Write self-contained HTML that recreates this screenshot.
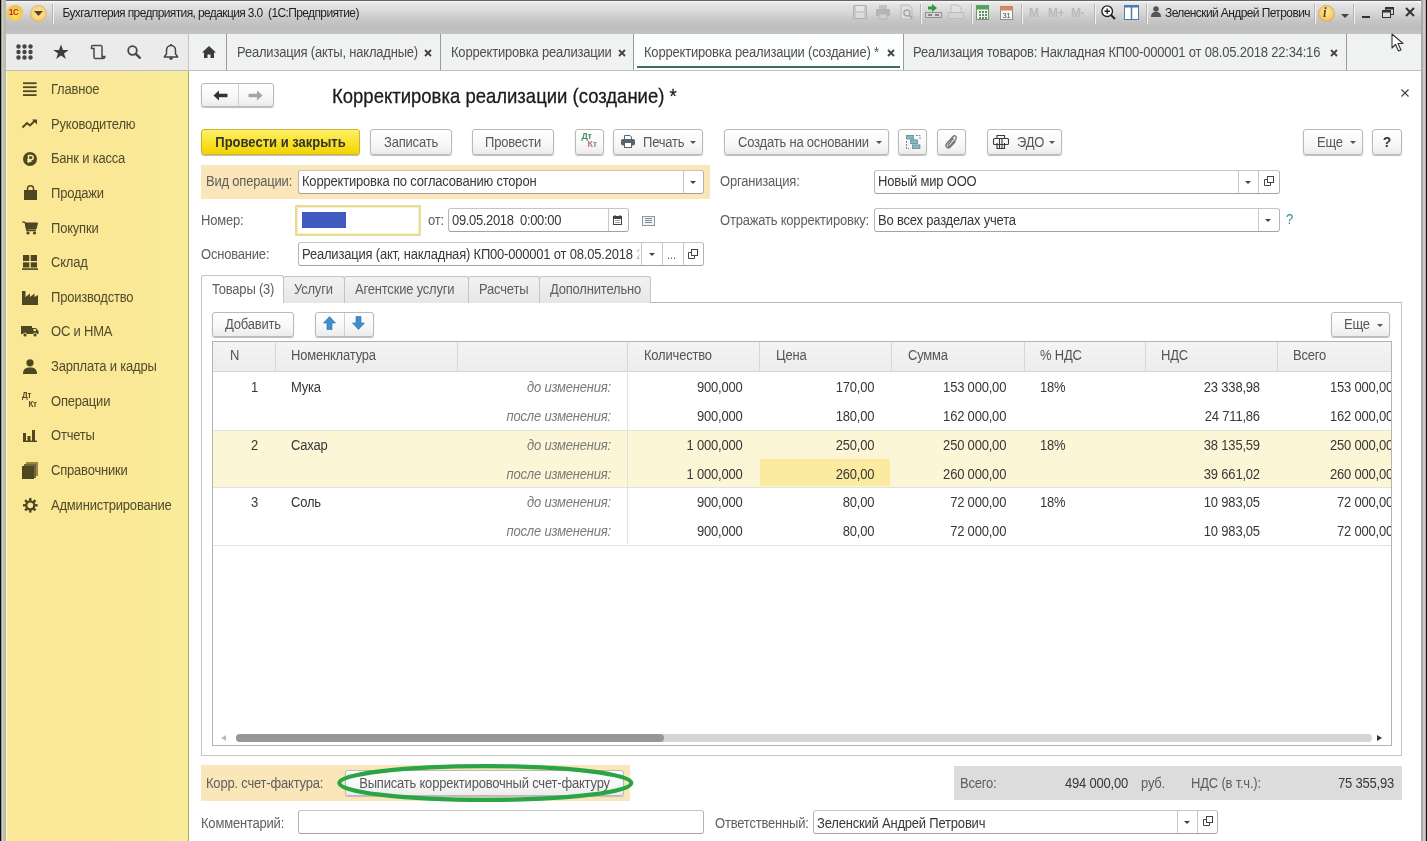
<!DOCTYPE html>
<html><head><meta charset="utf-8">
<style>
*{box-sizing:border-box;margin:0;padding:0}
html,body{width:1427px;height:841px;overflow:hidden;background:#fff}
body{position:relative;font-family:"Liberation Sans",sans-serif;font-size:13px;color:#4d4d4d;letter-spacing:-0.2px}
.a{position:absolute}
.t{position:absolute;white-space:pre;line-height:16px;transform:scaleY(1.1);transform-origin:0 12.5px}
svg{position:absolute;overflow:visible}
/* frame */
#frL{left:0;top:0;width:6px;height:841px;background:linear-gradient(90deg,#080808 0,#080808 1px,#8a8c8a 1px,#9a9c9a 1.6px,#cdd0cc 2px,#cdd0cc 3px,#c0bfac 3.5px,#b9b79e 6px)}
#frR{left:1421px;top:0;width:6px;height:841px;background:linear-gradient(90deg,#aaa 0,#aaa 1.5px,#c9c9c9 1.5px,#c9c9c9 4px,#aaa 4px,#aaa 5px,#111 5px)}
#frT{left:0;top:0;width:1427px;height:1px;background:#666}
#title{left:6px;top:1px;width:1415px;height:33px;background:linear-gradient(180deg,#f6f6f6 0,#e4e4e4 3px,#d8d8d8 11px,#c6c6c6 19px,#bdbdbd 27px,#c3c3c3 33px);border-top-right-radius:6px}
.sep{position:absolute;width:1px;background:#b5b5b5;box-shadow:1px 0 0 #f2f2f2}
/* toolbar row */
#tbL{left:6px;top:34px;width:183px;height:37px;background:#ebebeb;border-bottom:1px solid #bdbdbd;border-right:1px solid #c4c4c4}
#tabs{left:189px;top:34px;width:1232px;height:37px;background:#f0f1f1;border-bottom:1px solid #bfbfbf}
.tsep{position:absolute;top:34px;width:1px;height:36px;background:#9a9a9a}
.tab{font-size:13px;color:#4e4e4e;top:45px}
.tx{font-size:15px;color:#555;font-weight:bold;top:43px}
/* sidebar */
#side{left:6px;top:71px;width:183px;height:770px;background:linear-gradient(90deg,#fcf4bc 0,#fae896 3px,#fae896 60%,#f8ec9a 100%);border-right:1px solid #aea86e}
.si{left:51px;color:#514b2c;font-size:13px}
/* form */
.btn{position:absolute;height:26px;border:1px solid #b9b9b9;border-radius:3px;background:linear-gradient(180deg,#fff 0,#f7f7f7 60%,#ececec 100%);box-shadow:0 1px 1px #bdbdbd;color:#585858;text-align:center;line-height:25px;white-space:nowrap}
.inp{position:absolute;height:24px;border:1px solid #b4b4b4;border-top-color:#c4c4c4;border-bottom-color:#a2a2a2;border-radius:3px;background:#fff}
.lbl{position:absolute;white-space:pre;color:#5e5e5e;line-height:16px;transform:scaleY(1.1);transform-origin:0 13.3px;margin-top:0.8px}
.val{position:absolute;white-space:pre;color:#383838;line-height:16px;transform:scaleY(1.1);transform-origin:0 13.3px;margin-top:0.8px}
.s{display:inline-block;transform:scaleY(1.1);transform-origin:0 70%}
</style></head><body><div id="root" style="position:absolute;left:0;top:0;width:1427px;height:841px;will-change:transform">
<div class="a" id="frT"></div>
<div class="a" id="title"></div>
<div class="a" id="frL"></div>
<div class="a" id="frR"></div>

<!-- title bar content -->
<div class="a" style="left:7px;top:5px;width:16px;height:16px;border-radius:50%;background:radial-gradient(circle at 50% 60%,#ffe36a 0,#f6c84a 55%,#e7b24a 100%)"></div>
<div class="t" style="left:9px;top:5px;font-size:8px;font-weight:bold;color:#b8301a;letter-spacing:-0.5px">1С</div>
<div class="a" style="left:30px;top:5px;width:17px;height:17px;border-radius:50%;background:radial-gradient(circle at 50% 45%,#fde7a2 0,#f7d27a 60%,#d9b066 100%);border:1px solid #d9b874"></div>
<svg style="left:34px;top:11px" width="9" height="5"><path d="M0 0H9L4.5 5Z" fill="#5a4520"/></svg>
<div class="sep" style="left:52px;top:4px;height:20px"></div>
<div class="t" style="left:62.5px;top:5.2px;font-size:12px;color:#1e1e1e;letter-spacing:-0.62px">Бухгалтерия предприятия, редакция 3.0  (1С:Предприятие)</div>

<!-- title bar right icons -->
<svg style="left:853px;top:5px" width="14" height="14"><rect x="0.5" y="0.5" width="13" height="13" rx="1" fill="#c9c9c9" stroke="#b0b0b0"/><rect x="3" y="1" width="8" height="5" fill="#e4e4e4"/><rect x="3" y="8" width="8" height="5" fill="#dcdcdc"/></svg>
<svg style="left:876px;top:5px" width="14" height="14"><rect x="3" y="0" width="8" height="4" fill="#c2c2c2"/><rect x="0" y="4" width="14" height="7" rx="1" fill="#b5b5b5"/><rect x="3" y="9" width="8" height="5" fill="#d0d0d0" stroke="#b5b5b5"/></svg>
<svg style="left:900px;top:5px" width="14" height="14"><path d="M1 0H9L12 3V14H1Z" fill="#dedede" stroke="#b8b8b8"/><circle cx="7" cy="8" r="3" fill="none" stroke="#a8a8a8" stroke-width="1.5"/><path d="M9 10L12 13" stroke="#a8a8a8" stroke-width="2"/></svg>
<div class="sep" style="left:920px;top:4px;height:20px"></div>
<svg style="left:925px;top:4px" width="17" height="16"><path d="M7 0L12 4L7 8V5.5H3V2.5H7Z" fill="#2f9a3a"/><rect x="0.5" y="8.5" width="16" height="5" fill="#d7d7d7" stroke="#909090"/><rect x="3" y="10" width="4" height="2" fill="#888"/><rect x="10" y="10" width="4" height="2" fill="#888"/></svg>
<svg style="left:948px;top:5px" width="16" height="14"><path d="M3 0H10L13 3V8H3Z" fill="#e2e2e2" stroke="#c0c0c0"/><rect x="0.5" y="7.5" width="15" height="6" fill="#d5d5d5" stroke="#bdbdbd"/></svg>
<div class="sep" style="left:971px;top:4px;height:20px"></div>
<svg style="left:976px;top:5px" width="13" height="15"><rect x="0.5" y="0.5" width="12" height="14" fill="#f4f4f4" stroke="#6a9d6a"/><rect x="0.5" y="0.5" width="12" height="4" fill="#4fa35a"/><g fill="#6a8a6a"><rect x="3" y="6" width="2" height="2"/><rect x="6" y="6" width="2" height="2"/><rect x="9" y="6" width="2" height="2"/><rect x="3" y="9" width="2" height="2"/><rect x="6" y="9" width="2" height="2"/><rect x="9" y="9" width="2" height="2"/><rect x="3" y="12" width="2" height="2"/><rect x="6" y="12" width="2" height="2"/><rect x="9" y="12" width="2" height="2"/></g></svg>
<svg style="left:1000px;top:4px" width="13" height="16"><rect x="0.5" y="2.5" width="12" height="13" fill="#f7f7f7" stroke="#9a8a7a"/><rect x="0.5" y="2.5" width="12" height="4" fill="#d9865a"/><text x="6.5" y="14" font-size="7.5" text-anchor="middle" fill="#444" font-family="Liberation Sans">31</text></svg>
<div class="sep" style="left:1021px;top:4px;height:20px"></div>
<div class="t" style="left:1029px;top:5px;font-size:12px;font-weight:bold;color:#b9b9b9;letter-spacing:0">M</div>
<div class="t" style="left:1048px;top:5px;font-size:12px;font-weight:bold;color:#b9b9b9;letter-spacing:-0.5px">M+</div>
<div class="t" style="left:1071px;top:5px;font-size:12px;font-weight:bold;color:#b9b9b9;letter-spacing:-0.5px">M-</div>
<div class="sep" style="left:1094px;top:4px;height:20px"></div>
<svg style="left:1101px;top:5px" width="15" height="15"><circle cx="6.2" cy="6.2" r="5.3" fill="#fff" stroke="#222" stroke-width="1.4"/><path d="M3.5 6.2H9M6.2 3.5V9" stroke="#222" stroke-width="1.4"/><path d="M10 10L14 14" stroke="#222" stroke-width="2"/></svg>
<svg style="left:1124px;top:5px" width="15" height="15"><rect x="0.5" y="0.5" width="14" height="14" fill="#fff" stroke="#4a7db0"/><rect x="0.5" y="0.5" width="14" height="2" fill="#4a7db0"/><path d="M7.5 2V15" stroke="#4a7db0" stroke-width="1.5"/></svg>
<div class="sep" style="left:1146px;top:4px;height:20px"></div>
<svg style="left:1151px;top:6px" width="10" height="11"><circle cx="5" cy="3" r="2.8" fill="#555"/><path d="M0 11C0 7 2 6 5 6S10 7 10 11Z" fill="#555"/></svg>
<div class="t" style="left:1165px;top:5px;font-size:12px;color:#1e1e1e;letter-spacing:-0.6px">Зеленский Андрей Петрович</div>
<div class="sep" style="left:1314px;top:4px;height:20px"></div>
<div class="a" style="left:1318px;top:5px;width:17px;height:17px;border-radius:50%;background:radial-gradient(circle at 50% 40%,#ffe9a0 0,#f4cd6a 60%,#d8a850 100%);border:1px solid #d8b070"></div>
<div class="t" style="left:1323px;top:5px;font-size:13px;font-weight:bold;font-style:italic;color:#6a4a10;font-family:'Liberation Serif',serif">i</div>
<svg style="left:1341px;top:14px" width="8" height="4"><path d="M0 0H8L4 4Z" fill="#444"/></svg>
<div class="sep" style="left:1353px;top:4px;height:20px"></div>
<div class="a" style="left:1362px;top:16px;width:8px;height:2px;background:#333"></div>
<svg style="left:1382px;top:7px" width="12" height="11"><rect x="3.5" y="0.5" width="8" height="7" fill="none" stroke="#333"/><rect x="3.5" y="0.5" width="8" height="2" fill="#333"/><rect x="0.5" y="3.5" width="8" height="7" fill="#ddd" stroke="#333"/><rect x="0.5" y="3.5" width="8" height="2" fill="#333"/></svg>
<svg style="left:1405px;top:7px" width="10" height="10"><path d="M1 1L9 9M9 1L1 9" stroke="#333" stroke-width="2"/></svg>

<!-- toolbar row -->
<div class="a" id="tbL"></div>
<div class="a" id="tabs"></div>
<svg style="left:16px;top:44px" width="17" height="16"><g fill="#454545"><circle cx="2.5" cy="2.5" r="2.2"/><circle cx="8.5" cy="2.5" r="2.2"/><circle cx="14.5" cy="2.5" r="2.2"/><circle cx="2.5" cy="8" r="2.2"/><circle cx="8.5" cy="8" r="2.2"/><circle cx="14.5" cy="8" r="2.2"/><circle cx="2.5" cy="13.5" r="2.2"/><circle cx="8.5" cy="13.5" r="2.2"/><circle cx="14.5" cy="13.5" r="2.2"/></g></svg>
<svg style="left:53px;top:44px" width="16" height="16"><path d="M8 0.5L10 6H15.7L11 9.4L12.8 15L8 11.5L3.2 15L5 9.4L0.3 6H6Z" fill="#3d3d3d"/></svg>
<svg style="left:90px;top:44px" width="16" height="16"><path d="M3 1.5H10.5C11.5 1.5 12 2.2 12 3V12.5C12 13.8 13 14.5 14 14.5H5.5C4.5 14.5 4 13.8 4 13V4.5H1.5V3C1.5 2 2.2 1.5 3 1.5ZM12 12.5H14.8C14.8 13.8 14 14.5 13 14.5" fill="none" stroke="#4a4a4a" stroke-width="1.5"/></svg>
<svg style="left:127px;top:45px" width="15" height="15"><circle cx="5.5" cy="5.5" r="4.3" fill="none" stroke="#444" stroke-width="1.8"/><path d="M8.8 8.8L13.5 13.5" stroke="#444" stroke-width="2.4"/></svg>
<svg style="left:163px;top:44px" width="16" height="16"><path d="M8 1.5C5 1.5 3.5 4 3.5 6.5V10L1.5 12.5V13H14.5V12.5L12.5 10V6.5C12.5 4 11 1.5 8 1.5Z" fill="none" stroke="#444" stroke-width="1.5"/><circle cx="8" cy="14.3" r="1.6" fill="#444"/><rect x="7.2" y="0" width="1.6" height="2" fill="#444"/></svg>
<div class="tsep" style="left:226px"></div>
<svg style="left:202px;top:46px" width="14" height="12"><path d="M7 0L14 6.5H12V12H8.5V8.5H5.5V12H2V6.5H0Z" fill="#3a3a3a"/></svg>
<div class="t tab" style="left:237px">Реализация (акты, накладные)</div>
<svg style="left:424px;top:49px" width="8" height="8"><path d="M1 1L7 7M7 1L1 7" stroke="#444" stroke-width="1.8"/></svg>
<div class="tsep" style="left:440px"></div>
<div class="t tab" style="left:451px">Корректировка реализации</div>
<svg style="left:618px;top:49px" width="8" height="8"><path d="M1 1L7 7M7 1L1 7" stroke="#444" stroke-width="1.8"/></svg>
<div class="tsep" style="left:633px"></div>
<div class="a" style="left:634px;top:34px;width:269px;height:36px;background:#fdfefe"></div>
<div class="a" style="left:637px;top:66px;width:263px;height:2px;background:#3f6f58"></div>
<div class="t tab" style="left:644px">Корректировка реализации (создание) *</div>
<svg style="left:887px;top:49px" width="8" height="8"><path d="M1 1L7 7M7 1L1 7" stroke="#444" stroke-width="1.8"/></svg>
<div class="tsep" style="left:903px"></div>
<div class="t tab" style="left:913px">Реализация товаров: Накладная КП00-000001 от 08.05.2018 22:34:16</div>
<svg style="left:1330px;top:49px" width="8" height="8"><path d="M1 1L7 7M7 1L1 7" stroke="#444" stroke-width="1.8"/></svg>
<div class="tsep" style="left:1346px"></div>
<!-- cursor -->
<svg style="left:1391px;top:33px" width="14" height="20"><path d="M1 1V15L4.5 11.5L7.5 18L10 17L7 10.5H12Z" fill="#fff" stroke="#333" stroke-width="1.1" stroke-linejoin="round"/></svg>

<!-- sidebar -->
<div class="a" id="side"></div>

<div class="t si" style="top:82.0px">Главное</div>
<div class="t si" style="top:116.6px">Руководителю</div>
<div class="t si" style="top:151.3px">Банк и касса</div>
<div class="t si" style="top:185.9px">Продажи</div>
<div class="t si" style="top:220.5px">Покупки</div>
<div class="t si" style="top:255.1px">Склад</div>
<div class="t si" style="top:289.8px">Производство</div>
<div class="t si" style="top:324.4px">ОС и НМА</div>
<div class="t si" style="top:359.0px">Зарплата и кадры</div>
<div class="t si" style="top:393.7px">Операции</div>
<div class="t si" style="top:428.3px">Отчеты</div>
<div class="t si" style="top:462.9px">Справочники</div>
<div class="t si" style="top:497.6px">Администрирование</div>

<svg style="left:23px;top:82px" width="14" height="14"><g fill="#4f4622"><rect x="0" y="0.3" width="13.6" height="1.8"/><rect x="0" y="4.3" width="13.6" height="1.8"/><rect x="0" y="8.3" width="13.6" height="1.8"/><rect x="0" y="12.2" width="13.6" height="1.8"/></g></svg>
<svg style="left:22px;top:119px" width="16" height="10"><path d="M0.5 8.5L5 4L8 6.5L13 1.5" fill="none" stroke="#4f4622" stroke-width="2"/><path d="M10 0.5H15V5.5Z" fill="#4f4622"/></svg>
<svg style="left:23px;top:152px" width="14" height="14"><circle cx="7" cy="7" r="7" fill="#4f4622"/><path d="M5.5 11V3.5H8C9.5 3.5 10.2 4.4 10.2 5.6S9.5 7.7 8 7.7H4.3M4.3 9.3H8.5" fill="none" stroke="#f8e89a" stroke-width="1.5"/></svg>
<svg style="left:24px;top:185px" width="13" height="15"><path d="M0 5H13V15H0Z" fill="#4f4622"/><path d="M3.5 7V3.5C3.5 1.5 4.8 0.7 6.5 0.7S9.5 1.5 9.5 3.5V7" fill="none" stroke="#4f4622" stroke-width="1.5"/></svg>
<svg style="left:22px;top:221px" width="16" height="14"><path d="M0 1H3L4.5 8H14L15.5 2H4" fill="#4f4622" stroke="#4f4622" stroke-width="1"/><path d="M3.5 1.5L5 9.5H14" fill="none" stroke="#4f4622" stroke-width="1.6"/><circle cx="6" cy="12" r="1.6" fill="#4f4622"/><circle cx="12.5" cy="12" r="1.6" fill="#4f4622"/></svg>
<svg style="left:22px;top:255px" width="16" height="15"><g fill="#4f4622"><rect x="1" y="0" width="6.3" height="6"/><rect x="8.7" y="0" width="6.3" height="6"/><rect x="1" y="7.3" width="6.3" height="5.2"/><rect x="8.7" y="7.3" width="6.3" height="5.2"/><rect x="0" y="13.3" width="16" height="1.6"/></g></svg>
<svg style="left:22px;top:290px" width="16" height="15"><path d="M0 15V1H3.5V7L8 3.5V7L12.5 3.5V7L16 5V15Z" fill="#4f4622"/></svg>
<svg style="left:21px;top:325px" width="18" height="12"><path d="M0 1H11V9H0Z M11 3H15L17.5 6V9H11Z" fill="#4f4622"/><circle cx="4" cy="10" r="2" fill="#4f4622" stroke="#f8e89a" stroke-width="0.8"/><circle cx="14" cy="10" r="2" fill="#4f4622" stroke="#f8e89a" stroke-width="0.8"/><rect x="12.5" y="4" width="2.5" height="2" fill="#f8e89a"/></svg>
<svg style="left:23px;top:359px" width="14" height="15"><circle cx="7" cy="3.8" r="3.6" fill="#4f4622"/><path d="M0 15C0 10 2.5 8.5 7 8.5S14 10 14 15Z" fill="#4f4622"/></svg>
<text></text>
<div class="t" style="left:22px;top:392px;font-size:8px;font-weight:bold;color:#4f4622;letter-spacing:-0.3px;line-height:9px">Дт</div>
<div class="t" style="left:28.5px;top:400.5px;font-size:8px;font-weight:bold;color:#4f4622;letter-spacing:-0.3px;line-height:9px">Кт</div>
<svg style="left:23px;top:430px" width="14" height="12"><g fill="#4f4622"><rect x="0" y="3" width="3" height="9"/><rect x="4.5" y="6" width="3" height="6"/><rect x="9" y="0" width="3" height="12"/><rect x="0" y="10.6" width="14" height="1.4"/></g></svg>
<svg style="left:22px;top:462px" width="16" height="17"><path d="M4 0H16V14H14V2H4Z" fill="#4f4622" opacity="0.6"/><path d="M2 2H14V16H12V4H2Z" fill="#4f4622" opacity="0.8"/><rect x="0" y="4" width="12" height="13" fill="#4f4622"/></svg>
<svg style="left:22.5px;top:497.5px" width="15" height="15"><g fill="#4f4622"><rect x="6.1" y="0" width="2.4" height="3.4" transform="rotate(0 7.3 7.3)"/><rect x="6.1" y="0" width="2.4" height="3.4" transform="rotate(45 7.3 7.3)"/><rect x="6.1" y="0" width="2.4" height="3.4" transform="rotate(90 7.3 7.3)"/><rect x="6.1" y="0" width="2.4" height="3.4" transform="rotate(135 7.3 7.3)"/><rect x="6.1" y="0" width="2.4" height="3.4" transform="rotate(180 7.3 7.3)"/><rect x="6.1" y="0" width="2.4" height="3.4" transform="rotate(225 7.3 7.3)"/><rect x="6.1" y="0" width="2.4" height="3.4" transform="rotate(270 7.3 7.3)"/><rect x="6.1" y="0" width="2.4" height="3.4" transform="rotate(315 7.3 7.3)"/></g><circle cx="7.3" cy="7.3" r="4" fill="none" stroke="#4f4622" stroke-width="2.3"/></svg>


<!-- ===== FORM ===== -->
<div class="btn" style="left:201px;top:83px;width:73px;height:24px;border-radius:3px"></div>
<div class="a" style="left:238px;top:84px;width:1px;height:22px;background:#d0d0d0"></div>
<svg style="left:213px;top:90px" width="15" height="11"><path d="M0.5 5.5L6 0.5V3.8H14.5V7.2H6V10.5Z" fill="#333"/></svg>
<svg style="left:248px;top:90px" width="15" height="11"><path d="M14.5 5.5L9 0.5V3.8H0.5V7.2H9V10.5Z" fill="#a5a5a5"/></svg>
<div class="t" style="left:332px;top:85.7px;font-size:18.5px;line-height:22px;color:#1a1a1a;letter-spacing:0;-webkit-text-stroke:0.25px #1a1a1a">Корректировка реализации (создание) *</div>
<svg style="left:1401px;top:89px" width="8" height="8"><path d="M0.5 0.5L7.5 7.5M7.5 0.5L0.5 7.5" stroke="#444" stroke-width="1.2"/></svg>

<!-- command bar -->
<div class="btn" style="left:201px;top:129px;width:159px;background:linear-gradient(180deg,#fff06a 0,#f9e32a 50%,#f2d400 100%);border-color:#c9b13a;color:#333;font-weight:bold;letter-spacing:0"><span class="s">Провести и закрыть</span></div>
<div class="btn" style="left:370px;top:129px;width:82px"><span class="s">Записать</span></div>
<div class="btn" style="left:472px;top:129px;width:82px"><span class="s">Провести</span></div>
<div class="btn" style="left:575px;top:129px;width:29px"></div>
<div class="t" style="left:581.5px;top:131px;font-size:9px;font-weight:bold;color:#4a9070;line-height:10px;letter-spacing:-0.3px">Дт</div>
<div class="t" style="left:587.5px;top:139px;font-size:9px;font-weight:bold;color:#b87878;line-height:10px;letter-spacing:-0.3px">Кт</div>
<div class="btn" style="left:613px;top:129px;width:90px;text-align:left;padding-left:29px"><span class="s">Печать</span></div>
<svg style="left:621px;top:135px" width="14" height="13"><path d="M3.5 4V0.5H9L10.5 2V4" fill="#fff" stroke="#56646e"/><rect x="0" y="4" width="14" height="6.5" rx="2" fill="#56646e"/><rect x="3.5" y="7.5" width="7" height="5" fill="#fff" stroke="#56646e"/></svg>
<svg style="left:690px;top:141px" width="6" height="3"><path d="M0 0H6L3 3Z" fill="#555"/></svg>
<div class="btn" style="left:724px;top:129px;width:165px;text-align:left;padding-left:13px"><span class="s">Создать на основании</span></div>
<svg style="left:876px;top:141px" width="6" height="3"><path d="M0 0H6L3 3Z" fill="#555"/></svg>
<div class="btn" style="left:898px;top:129px;width:29px"></div>
<svg style="left:906px;top:135px" width="15" height="15"><g fill="#8fb4c4" stroke="#5a8a9e" stroke-width="0.8"><rect x="0.4" y="0.4" width="7" height="3.6"/><rect x="4.4" y="4.9" width="7" height="3.6"/><rect x="6.4" y="9.9" width="7.5" height="3.6"/></g><path d="M0.5 6V13.5H3M10 0.5H14V4" fill="none" stroke="#6a8a9a" stroke-width="1" stroke-dasharray="2 1"/></svg>
<div class="btn" style="left:937px;top:129px;width:29px"></div>
<svg style="left:944px;top:134px" width="14" height="15"><path d="M9.5 4L4.5 10.5C3.5 12 4.8 13.2 6 12L11.8 5.2C13.5 3 11 0.5 9 2.5L2.8 9.5C0.5 12.2 3.8 15.5 6.5 12.8L11.5 7.5" fill="none" stroke="#777" stroke-width="1.4"/></svg>
<div class="btn" style="left:987px;top:129px;width:75px;text-align:left;padding-left:29px"><span class="s">ЭДО</span></div>
<svg style="left:993px;top:135px" width="16" height="14"><g fill="none" stroke="#3a3a3a" stroke-width="1.1"><path d="M4 3V0.5H11.5V3"/><rect x="0.5" y="3.5" width="15" height="6" rx="1"/><path d="M4 8V13.5H11.5V8"/><path d="M6.5 3.5V13M9 3.5V13"/></g></svg>
<svg style="left:1049px;top:141px" width="6" height="3"><path d="M0 0H6L3 3Z" fill="#555"/></svg>
<div class="btn" style="left:1303px;top:129px;width:60px;text-align:left;padding-left:13px"><span class="s">Еще</span></div>
<svg style="left:1350px;top:141px" width="6" height="3"><path d="M0 0H6L3 3Z" fill="#555"/></svg>
<div class="btn" style="left:1372px;top:129px;width:30px;font-weight:bold;color:#333;font-size:14px;letter-spacing:0"><span class="s">?</span></div>

<!-- row 1 -->
<div class="a" style="left:201px;top:165px;width:509px;height:34px;background:#fae6b8"></div>
<div class="lbl" style="left:206px;top:173px">Вид операции:</div>
<div class="inp" style="left:298px;top:170px;width:406px"></div>
<div class="a" style="left:683px;top:171px;width:1px;height:22px;background:#c8c8c8"></div>
<svg style="left:690px;top:181px" width="6" height="3"><path d="M0 0H6L3 3Z" fill="#444"/></svg>
<div class="val" style="left:302px;top:173px">Корректировка по согласованию сторон</div>

<div class="lbl" style="left:720px;top:173px">Организация:</div>
<div class="inp" style="left:874px;top:170px;width:406px"></div>
<div class="a" style="left:1238px;top:171px;width:1px;height:22px;background:#c8c8c8"></div>
<div class="a" style="left:1258px;top:171px;width:1px;height:22px;background:#c8c8c8"></div>
<svg style="left:1245px;top:181px" width="6" height="3"><path d="M0 0H6L3 3Z" fill="#444"/></svg>
<svg style="left:1264px;top:176px" width="10" height="10"><g fill="none" stroke="#444" stroke-width="1"><rect x="3.5" y="0.5" width="6" height="6"/><path d="M3 3.5H0.5V9.5H6.5V7"/></g></svg>
<div class="val" style="left:878px;top:173px">Новый мир ООО</div>

<!-- row 2 -->
<div class="lbl" style="left:201px;top:212px">Номер:</div>
<div class="a" style="left:295px;top:205px;width:126px;height:31px;border:2px solid #e6dc96;border-radius:1px;background:#fff;box-shadow:inset 0 0 0 1px #f6f0c8"></div>
<div class="a" style="left:302px;top:212px;width:44px;height:16px;background:#3f5bbf"></div>
<div class="lbl" style="left:428px;top:212px">от:</div>
<div class="inp" style="left:448px;top:208px;width:181px"></div>
<div class="a" style="left:608px;top:209px;width:1px;height:22px;background:#c8c8c8"></div>
<div class="val" style="left:452px;top:212px;letter-spacing:-0.35px">09.05.2018  0:00:00</div>
<svg style="left:613px;top:215px" width="9" height="10"><rect x="0.5" y="1.5" width="8" height="8" fill="#fff" stroke="#444"/><rect x="0.5" y="1.5" width="8" height="2.5" fill="#444"/><rect x="1.5" y="0" width="1" height="2" fill="#444"/><rect x="6.5" y="0" width="1" height="2" fill="#444"/><path d="M2 5.5H7M2 7.5H7" stroke="#888" stroke-width="0.8"/></svg>
<svg style="left:642px;top:216px" width="13" height="10"><rect x="0.5" y="0.5" width="12" height="9" fill="#f2f5f8" stroke="#8a98a6"/><path d="M3 2.5H10M3 4.5H10M3 6.5H10" stroke="#7a8896" stroke-width="1"/></svg>

<div class="lbl" style="left:720px;top:212px">Отражать корректировку:</div>
<div class="inp" style="left:874px;top:208px;width:406px"></div>
<div class="a" style="left:1258px;top:209px;width:1px;height:22px;background:#c8c8c8"></div>
<svg style="left:1265px;top:219px" width="6" height="3"><path d="M0 0H6L3 3Z" fill="#444"/></svg>
<div class="val" style="left:878px;top:212px">Во всех разделах учета</div>
<div class="t" style="left:1286px;top:212px;color:#3a8a8a;font-size:13px">?</div>

<!-- row 3 -->
<div class="lbl" style="left:201px;top:246px">Основание:</div>
<div class="inp" style="left:298px;top:242px;width:406px"></div>
<div class="a" style="left:641px;top:243px;width:1px;height:22px;background:#c8c8c8"></div>
<div class="a" style="left:662px;top:243px;width:1px;height:22px;background:#c8c8c8"></div>
<div class="a" style="left:683px;top:243px;width:1px;height:22px;background:#c8c8c8"></div>
<div class="a" style="left:299px;top:243px;width:342px;height:22px;overflow:hidden"><div class="val" style="left:3px;top:3px">Реализация (акт, накладная) КП00-000001 от 08.05.2018 22:34:16</div><div class="a" style="right:0;top:0;width:8px;height:22px;background:linear-gradient(90deg,rgba(255,255,255,0),#fff)"></div></div>
<svg style="left:649px;top:253px" width="6" height="3"><path d="M0 0H6L3 3Z" fill="#444"/></svg>
<div class="t" style="left:667px;top:247px;color:#666;font-size:11px;letter-spacing:0">...</div>
<svg style="left:688px;top:249px" width="10" height="10"><g fill="none" stroke="#444" stroke-width="1"><rect x="3.5" y="0.5" width="6" height="6"/><path d="M3 3.5H0.5V9.5H6.5V7"/></g></svg>


<!-- tabs panel -->
<div class="a" style="left:201px;top:302px;width:1201px;height:454px;border:1px solid #c4c4c4;border-top-color:#b8b8b8"></div>
<div class="a" style="left:283px;top:276px;width:62px;height:27px;border:1px solid #c4c4c4;border-bottom:none;border-radius:3px 3px 0 0;background:linear-gradient(180deg,#f2f2f2,#e6e6e6)"></div>
<div class="a" style="left:344px;top:276px;width:125px;height:27px;border:1px solid #c4c4c4;border-bottom:none;border-radius:3px 3px 0 0;background:linear-gradient(180deg,#f2f2f2,#e6e6e6)"></div>
<div class="a" style="left:468px;top:276px;width:72px;height:27px;border:1px solid #c4c4c4;border-bottom:none;border-radius:3px 3px 0 0;background:linear-gradient(180deg,#f2f2f2,#e6e6e6)"></div>
<div class="a" style="left:539px;top:276px;width:112px;height:27px;border:1px solid #c4c4c4;border-bottom:none;border-radius:3px 3px 0 0;background:linear-gradient(180deg,#f2f2f2,#e6e6e6)"></div>
<div class="a" style="left:201px;top:275px;width:83px;height:28px;border:1px solid #c4c4c4;border-bottom:none;border-radius:3px 3px 0 0;background:#fff"></div>
<div class="lbl" style="left:212px;top:281px">Товары (3)</div>
<div class="lbl" style="left:294px;top:281px">Услуги</div>
<div class="lbl" style="left:355px;top:281px">Агентские услуги</div>
<div class="lbl" style="left:479px;top:281px">Расчеты</div>
<div class="lbl" style="left:550px;top:281px">Дополнительно</div>

<div class="btn" style="left:212px;top:312px;width:82px;height:25px;line-height:23px"><span class="s">Добавить</span></div>
<div class="btn" style="left:315px;top:312px;width:59px;height:25px"></div>
<div class="a" style="left:344px;top:313px;width:1px;height:23px;background:#d0d0d0"></div>
<svg style="left:323px;top:316px" width="13" height="14"><path d="M6.5 0.5L12.5 7H9V13.5H4V7H0.5Z" fill="#3d8ed0" stroke="#2a70a8" stroke-width="0.6"/></svg>
<svg style="left:352px;top:316px" width="13" height="14"><path d="M6.5 13.5L12.5 7H9V0.5H4V7H0.5Z" fill="#3d8ed0" stroke="#2a70a8" stroke-width="0.6"/></svg>
<div class="btn" style="left:1331px;top:312px;width:59px;height:25px;line-height:23px;text-align:left;padding-left:12px"><span class="s">Еще</span></div>
<svg style="left:1377px;top:324px" width="6" height="3"><path d="M0 0H6L3 3Z" fill="#555"/></svg>

<!-- table -->
<div class="a" style="left:212px;top:341px;width:1180px;height:405px;border:1px solid #b4b4b4;background:#fff;overflow:hidden">
  <div class="a" style="left:0;top:0;width:1180px;height:30px;background:linear-gradient(180deg,#f4f4f4,#ececec);border-bottom:1px solid #d4d4d4"></div>
  <div class="a" style="left:0;top:88px;width:1180px;height:57px;background:#fcf6d6"></div>
  <div class="a" style="left:547px;top:117px;width:130px;height:27px;background:#faeba0"></div>
  <div class="a" style="left:0;top:88px;width:1180px;height:1px;background:#e2e2e2"></div>
  <div class="a" style="left:0;top:145px;width:1180px;height:1px;background:#e2e2e2"></div>
  <div class="a" style="left:0;top:203px;width:1180px;height:1px;background:#e2e2e2"></div>
</div>
<div class="a" style="left:275px;top:342px;width:1px;height:29px;background:#d6d6d6"></div>
<div class="a" style="left:457px;top:342px;width:1px;height:29px;background:#d6d6d6"></div>
<div class="a" style="left:627px;top:342px;width:1px;height:29px;background:#d6d6d6"></div>
<div class="a" style="left:759px;top:342px;width:1px;height:29px;background:#d6d6d6"></div>
<div class="a" style="left:891px;top:342px;width:1px;height:29px;background:#d6d6d6"></div>
<div class="a" style="left:1024px;top:342px;width:1px;height:29px;background:#d6d6d6"></div>
<div class="a" style="left:1145px;top:342px;width:1px;height:29px;background:#d6d6d6"></div>
<div class="a" style="left:1277px;top:342px;width:1px;height:29px;background:#d6d6d6"></div>
<div class="a" style="left:627px;top:371px;width:1px;height:173px;background:#e2e2e2"></div>
<div class="lbl" style="left:230px;top:347.6px;color:#555">N</div>
<div class="lbl" style="left:291px;top:347.6px;color:#555">Номенклатура</div>
<div class="lbl" style="left:644px;top:347.6px;color:#555">Количество</div>
<div class="lbl" style="left:776px;top:347.6px;color:#555">Цена</div>
<div class="lbl" style="left:908px;top:347.6px;color:#555">Сумма</div>
<div class="lbl" style="left:1040px;top:347.6px;color:#555">% НДС</div>
<div class="lbl" style="left:1161px;top:347.6px;color:#555">НДС</div>
<div class="lbl" style="left:1293px;top:347.6px;color:#555">Всего</div>
<div class="val" style="left:240px;width:18px;text-align:right;top:379.1px">1</div>
<div class="val" style="left:291px;top:379.1px">Мука</div>
<div class="val" style="left:411px;width:200px;text-align:right;top:379.1px;font-style:italic;color:#7a7a7a">до изменения:</div>
<div class="val" style="left:411px;width:200px;text-align:right;top:408.0px;font-style:italic;color:#7a7a7a">после изменения:</div>
<div class="val" style="left:592.6px;width:150px;text-align:right;top:379.1px">900,000</div>
<div class="val" style="left:724.3px;width:150px;text-align:right;top:379.1px">170,00</div>
<div class="val" style="left:856.2px;width:150px;text-align:right;top:379.1px">153 000,00</div>
<div class="val" style="left:1040px;top:379.1px">18%</div>
<div class="val" style="left:1109.9px;width:150px;text-align:right;top:379.1px">23 338,98</div>
<div class="val" style="left:1243.0px;width:150px;text-align:right;top:379.1px">153 000,00</div>
<div class="val" style="left:592.6px;width:150px;text-align:right;top:408.0px">900,000</div>
<div class="val" style="left:724.3px;width:150px;text-align:right;top:408.0px">180,00</div>
<div class="val" style="left:856.2px;width:150px;text-align:right;top:408.0px">162 000,00</div>
<div class="val" style="left:1109.9px;width:150px;text-align:right;top:408.0px">24 711,86</div>
<div class="val" style="left:1243.0px;width:150px;text-align:right;top:408.0px">162 000,00</div>
<div class="val" style="left:240px;width:18px;text-align:right;top:436.9px">2</div>
<div class="val" style="left:291px;top:436.9px">Сахар</div>
<div class="val" style="left:411px;width:200px;text-align:right;top:436.9px;font-style:italic;color:#7a7a7a">до изменения:</div>
<div class="val" style="left:411px;width:200px;text-align:right;top:465.8px;font-style:italic;color:#7a7a7a">после изменения:</div>
<div class="val" style="left:592.6px;width:150px;text-align:right;top:436.9px">1 000,000</div>
<div class="val" style="left:724.3px;width:150px;text-align:right;top:436.9px">250,00</div>
<div class="val" style="left:856.2px;width:150px;text-align:right;top:436.9px">250 000,00</div>
<div class="val" style="left:1040px;top:436.9px">18%</div>
<div class="val" style="left:1109.9px;width:150px;text-align:right;top:436.9px">38 135,59</div>
<div class="val" style="left:1243.0px;width:150px;text-align:right;top:436.9px">250 000,00</div>
<div class="val" style="left:592.6px;width:150px;text-align:right;top:465.8px">1 000,000</div>
<div class="val" style="left:724.3px;width:150px;text-align:right;top:465.8px">260,00</div>
<div class="val" style="left:856.2px;width:150px;text-align:right;top:465.8px">260 000,00</div>
<div class="val" style="left:1109.9px;width:150px;text-align:right;top:465.8px">39 661,02</div>
<div class="val" style="left:1243.0px;width:150px;text-align:right;top:465.8px">260 000,00</div>
<div class="val" style="left:240px;width:18px;text-align:right;top:494.0px">3</div>
<div class="val" style="left:291px;top:494.0px">Соль</div>
<div class="val" style="left:411px;width:200px;text-align:right;top:494.0px;font-style:italic;color:#7a7a7a">до изменения:</div>
<div class="val" style="left:411px;width:200px;text-align:right;top:522.9px;font-style:italic;color:#7a7a7a">после изменения:</div>
<div class="val" style="left:592.6px;width:150px;text-align:right;top:494.0px">900,000</div>
<div class="val" style="left:724.3px;width:150px;text-align:right;top:494.0px">80,00</div>
<div class="val" style="left:856.2px;width:150px;text-align:right;top:494.0px">72 000,00</div>
<div class="val" style="left:1040px;top:494.0px">18%</div>
<div class="val" style="left:1109.9px;width:150px;text-align:right;top:494.0px">10 983,05</div>
<div class="val" style="left:1243.0px;width:150px;text-align:right;top:494.0px">72 000,00</div>
<div class="val" style="left:592.6px;width:150px;text-align:right;top:522.9px">900,000</div>
<div class="val" style="left:724.3px;width:150px;text-align:right;top:522.9px">80,00</div>
<div class="val" style="left:856.2px;width:150px;text-align:right;top:522.9px">72 000,00</div>
<div class="val" style="left:1109.9px;width:150px;text-align:right;top:522.9px">10 983,05</div>
<div class="val" style="left:1243.0px;width:150px;text-align:right;top:522.9px">72 000,00</div>

<!-- right clip of table -->
<div class="a" style="left:1391px;top:341px;width:10px;height:405px;background:#fff;border-left:1px solid #b4b4b4"></div>
<!-- scrollbar -->
<div class="a" style="left:236px;top:734px;width:1136px;height:8px;border-radius:4px;background:#d6d6d6"></div>
<div class="a" style="left:236px;top:734px;width:428px;height:8px;border-radius:4px;background:#979797"></div>
<svg style="left:221px;top:735px" width="5" height="6"><path d="M5 0V6L0 3Z" fill="#bbb"/></svg>
<svg style="left:1377px;top:735px" width="5" height="6"><path d="M0 0V6L5 3Z" fill="#333"/></svg>

<!-- bottom -->
<div class="a" style="left:201px;top:765px;width:429px;height:36px;background:#fae6b8"></div>
<div class="lbl" style="left:206px;top:775px">Корр. счет-фактура:</div>
<div class="btn" style="left:345px;top:770px;width:279px;height:26px"><span class="s">Выписать корректировочный счет-фактуру</span></div>
<svg style="left:335px;top:762px" width="301" height="42"><ellipse cx="150.3" cy="21" rx="146" ry="16.9" fill="none" stroke="#2aa445" stroke-width="4.2"/></svg>
<div class="a" style="left:954px;top:766px;width:448px;height:34px;background:#dcdcdc"></div>
<div class="lbl" style="left:960px;top:775px">Всего:</div>
<div class="val" style="left:978px;width:150px;text-align:right;top:775px">494 000,00</div>
<div class="lbl" style="left:1141px;top:775px">руб.</div>
<div class="lbl" style="left:1191px;top:775px">НДС (в т.ч.):</div>
<div class="val" style="left:1244px;width:150px;text-align:right;top:775px">75 355,93</div>

<div class="lbl" style="left:201px;top:815px">Комментарий:</div>
<div class="inp" style="left:298px;top:810px;width:406px"></div>
<div class="lbl" style="left:715px;top:815px">Ответственный:</div>
<div class="inp" style="left:813px;top:810px;width:405px"></div>
<div class="a" style="left:1177px;top:811px;width:1px;height:22px;background:#c8c8c8"></div>
<div class="a" style="left:1197px;top:811px;width:1px;height:22px;background:#c8c8c8"></div>
<svg style="left:1184px;top:821px" width="6" height="3"><path d="M0 0H6L3 3Z" fill="#444"/></svg>
<svg style="left:1203px;top:816px" width="10" height="10"><g fill="none" stroke="#444" stroke-width="1"><rect x="3.5" y="0.5" width="6" height="6"/><path d="M3 3.5H0.5V9.5H6.5V7"/></g></svg>
<div class="val" style="left:817px;top:815px">Зеленский Андрей Петрович</div>

</div></body></html>
